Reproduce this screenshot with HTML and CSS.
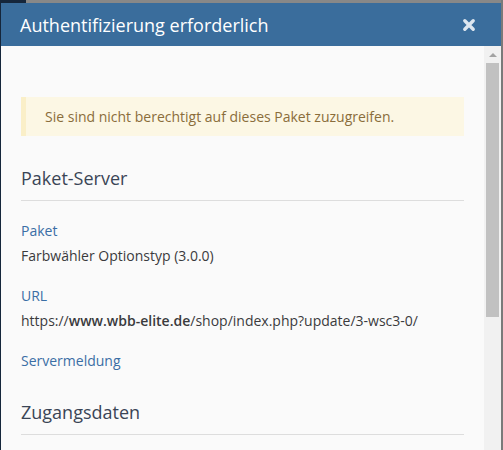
FILE: index.html
```html
<!DOCTYPE html>
<html lang="de">
<head>
<meta charset="utf-8">
<title>Authentifizierung erforderlich</title>
<link rel="stylesheet" href="styles.css">
</head>
<body>
<div class="page">
  <div class="sidebar"></div>
  <div class="main"></div>
</div>

<div class="dialog" role="dialog">
  <header class="dialog-header">
    <h1 class="dialog-title">Authentifizierung erforderlich</h1>
    <button class="dialog-close" aria-label="Schließen">
      <svg width="14" height="14" viewBox="0 0 14 14">
        <path d="M2.8 2.8 L11.2 11.2 M11.2 2.8 L2.8 11.2" stroke="#dde6ef" stroke-width="3.4" stroke-linecap="round"/>
      </svg>
    </button>
  </header>
  <div class="dialog-body">
    <div class="dialog-content">
      <p class="warning">Sie sind nicht berechtigt auf dieses Paket zuzugreifen.</p>

      <section class="section">
        <h2 class="section-title">Paket-Server</h2>
        <dl class="fields">
          <dt>Paket</dt>
          <dd>Farbwähler Optionstyp (3.0.0)</dd>
          <dt>URL</dt>
          <dd>https://<strong>www.wbb-elite.de</strong>/shop/index.php?update/3-wsc3-0/</dd>
          <dt>Servermeldung</dt>
          <dd class="empty"></dd>
        </dl>
      </section>

      <section class="section">
        <h2 class="section-title">Zugangsdaten</h2>
      </section>
    </div>
    <div class="scrollbar" aria-hidden="true">
      <div class="scroll-btn up"></div>
      <div class="scroll-track"><div class="scroll-thumb"></div></div>
      <div class="scroll-btn down"></div>
    </div>
  </div>
</div>
</body>
</html>
```

FILE: styles.css
```css
html, body {
  margin: 0;
  height: 100%;
  overflow: hidden;
}

body {
  font-family: "Open Sans", "Noto Sans", sans-serif;
  background: #878787;
  position: relative;
}

/* page behind the modal overlay */
.page {
  display: flex;
  height: 100%;
}

.sidebar {
  width: 26px;
  background: #15263b;
}

.main {
  flex: 1;
  background: #888888;
  border-right: 2px solid #7a7a7a;
}

/* modal dialog */
.dialog {
  position: absolute;
  left: 1px;
  top: 3px;
  width: 500px;
  height: 520px;
  display: flex;
  flex-direction: column;
  background: #fafafa;
}

.dialog-header {
  background: #3a6d9c;
  height: 43px;
  display: flex;
  align-items: center;
  justify-content: space-between;
  padding: 0 25px 0 19px;
  flex: none;
}

.dialog-title {
  margin: 0;
  color: #fff;
  font-size: 18px;
  font-weight: 400;
  line-height: 1;
}

.dialog-close {
  border: 0;
  background: none;
  padding: 0;
  width: 14px;
  height: 14px;
  display: flex;
}

.dialog-body {
  flex: 1;
  display: flex;
  min-height: 0;
}

.dialog-content {
  flex: 1;
  padding: 51px 20px 0 20px;
  color: #3a3a3d;
  font-size: 14px;
  line-height: 19px;
}

.warning {
  margin: 0;
  background: #fcf7e4;
  border-left: 5px solid #faefc8;
  color: #8a6d3b;
  padding: 10px 19px;
}

.section {
  margin-top: 30px;
}

.section-title {
  margin: 0;
  font-size: 18px;
  font-weight: 400;
  color: #3a4556;
  line-height: 25px;
  padding-bottom: 9px;
  border-bottom: 1px solid #dddddd;
}

.fields {
  margin: 20px 0 0;
}

.fields dt {
  color: #3a6ea5;
}

.fields dd {
  margin: 6px 0 21px;
}

.fields dd.empty {
  margin: 0;
}

.fields strong {
  font-weight: 600;
}

/* classic scrollbar of the dialog body */
.scrollbar {
  width: 17px;
  background: #f1f1f1;
  display: flex;
  flex-direction: column;
  flex: none;
}

.scroll-btn {
  height: 17px;
  display: flex;
  align-items: center;
  justify-content: center;
  flex: none;
}

.scroll-btn::before {
  content: "";
  width: 0;
  height: 0;
  border-left: 4px solid transparent;
  border-right: 4px solid transparent;
}

.scroll-btn.up::before {
  border-bottom: 4px solid #a3a3a3;
}

.scroll-btn.down::before {
  border-top: 4px solid #505050;
}

.scroll-track {
  flex: 1;
  padding: 0 2px;
}

.scroll-thumb {
  height: 254px;
  background: #c1c1c1;
}
```
